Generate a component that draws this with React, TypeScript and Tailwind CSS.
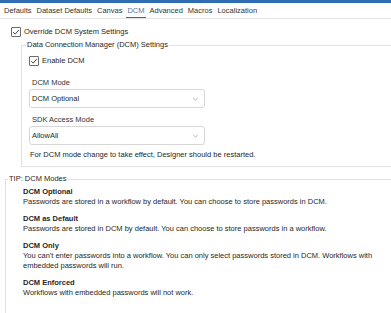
import React from 'react';

const font = { fontFamily: '"Liberation Sans", Arial, sans-serif' };

function Check() {
  return (
    <span className="flex h-[10px] w-[10px] shrink-0 items-center justify-center rounded-[1px] border border-[#6b6b6b] bg-white">
      <svg viewBox="0 0 10 10" className="h-[8px] w-[8px]">
        <path d="M1.5 5.2 L4 7.6 L8.6 2.4" fill="none" stroke="#2b2b2b" strokeWidth="1.1" />
      </svg>
    </span>
  );
}

function Select({ value }: { value: string }) {
  return (
    <div className="mt-[1px] flex h-[19px] w-[176px] items-center justify-between rounded-[3px] border border-[#d6d6d6] bg-white pl-[2px] pr-[5px]">
      <span className="leading-[10px]">{value}</span>
      <svg viewBox="0 0 8 5" className="h-[4px] w-[7px]">
        <path d="M1 1 L4 4 L7 1" fill="none" stroke="#9a9a9a" strokeWidth="0.9" />
      </svg>
    </div>
  );
}

const tabs = ['Defaults', 'Dataset Defaults', 'Canvas', 'DCM', 'Advanced', 'Macros', 'Localization'];

const modes = [
  { title: 'DCM Optional', desc: ['Passwords are stored in a workflow by default. You can choose to store passwords in DCM.'] },
  { title: 'DCM as Default', desc: ['Passwords are stored in DCM by default. You can choose to store passwords in a workflow.'] },
  {
    title: 'DCM Only',
    desc: [
      "You can't enter passwords into a workflow. You can only select passwords stored in DCM. Workflows with",
      'embedded passwords will run.',
    ],
  },
  { title: 'DCM Enforced', desc: ['Workflows with embedded passwords will not work.'] },
];

export default function App() {
  return (
    <div className="h-[313px] w-[391px] overflow-hidden bg-white text-[7.5px] leading-[10px] text-[#1f1f1f]" style={font}>
      <div className="h-[3px] bg-[#2f6db3]" />
      <div className="flex h-[16px] items-center gap-[5px] border-b border-[#e3e3e3] pl-[4px]">
        {tabs.map((t) =>
          t === 'DCM' ? (
            <span key={t} className="relative flex h-full items-center text-[#4b78a8]">
              {t}
              <span className="absolute bottom-[0px] left-[-1px] right-[-1px] h-[1.5px] bg-[#2f6db3]" />
            </span>
          ) : (
            <span key={t} className="text-[#333]">
              {t}
            </span>
          )
        )}
      </div>

      <div className="mt-[8px] flex items-center gap-[3px] pl-[11px]">
        <Check />
        <span>Override DCM System Settings</span>
      </div>

      <fieldset className="ml-[21px] mt-[3px] w-[390px] border border-[#e1e1e1] p-0 pb-[6px]">
        <legend className="ml-[4px] px-[1px] leading-[10px]">Data Connection Manager (DCM) Settings</legend>
        <div className="pl-[7px] pt-[6px]">
          <div className="flex items-center gap-[3px]">
            <Check />
            <span>Enable DCM</span>
          </div>
          <div className="mt-[12px] pl-[3px] text-[#333]">DCM Mode</div>
          <Select value="DCM Optional" />
          <div className="mt-[7px] pl-[3px] text-[#333]">SDK Access Mode</div>
          <Select value="AllowAll" />
          <div className="mt-[5px] pl-[1px]">For DCM mode change to take effect, Designer should be restarted.</div>
        </div>
      </fieldset>

      <fieldset className="ml-[5px] mt-[7px] h-[200px] w-[400px] border border-[#e1e1e1] p-0">
        <legend className="ml-[2px] px-[1px] leading-[10px]">TIP: DCM Modes</legend>
        <div className="flex flex-col gap-[7px] pl-[17px] pt-[3px]">
          {modes.map((m) => (
            <div key={m.title}>
              <div className="font-bold">{m.title}</div>
              {m.desc.map((d) => (
                <div key={d} className="whitespace-nowrap">
                  {d}
                </div>
              ))}
            </div>
          ))}
        </div>
      </fieldset>
    </div>
  );
}
